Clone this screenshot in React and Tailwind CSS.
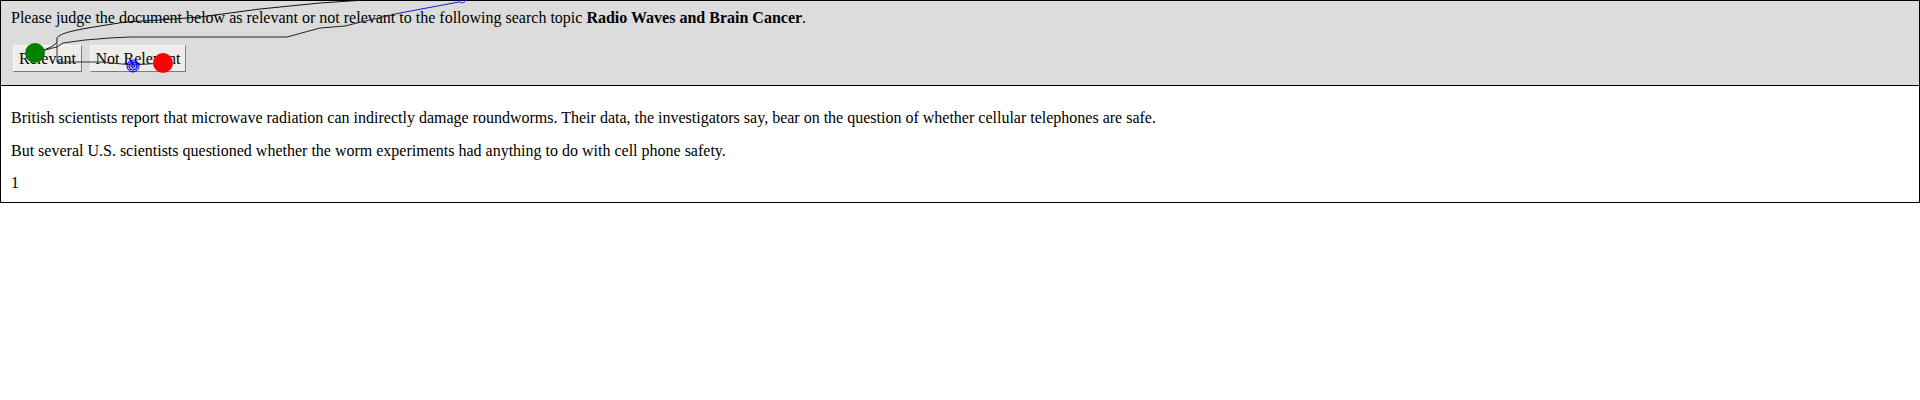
import React from "react";

const paragraphs = [
  "British scientists report that microwave radiation can indirectly damage roundworms. Their data, the investigators say, bear on the question of whether cellular telephones are safe.",
  "But several U.S. scientists questioned whether the worm experiments had anything to do with cell phone safety.",
  "1",
];

const MouseTrail = () => (
  <svg
    className="pointer-events-none absolute left-0 top-0"
    width="500"
    height="90"
    viewBox="0 0 500 90"
  >
    <path
      d="M35 53 C45 50 55 46 57 42 L57 38 C60 33 75 30 100 26 L125 22 L160 20 L200 17 L260 9 L320 3 L365 0"
      fill="none"
      stroke="#111"
      strokeWidth="1"
    />
    <path
      d="M35 53 C45 50 52 48 57 47 L63 43 L85 40 L110 38 L130 37 L287 37 L320 28 L345 26 L365 21 L400 13"
      fill="none"
      stroke="#222"
      strokeWidth="1"
    />
    <path d="M400 13 L459 2" fill="none" stroke="#1a1acc" strokeWidth="1" />
    <circle cx="462" cy="0" r="3" fill="none" stroke="#3333ff" strokeWidth="1" />
    <path
      d="M57 43 L57 62 L100 62 L133 65 L163 63"
      fill="none"
      stroke="#333"
      strokeWidth="1"
    />
    <circle cx="35" cy="53" r="10" fill="#008000" />
    <circle cx="163" cy="63" r="10" fill="#ff0000" />
    <circle cx="133" cy="66" r="6" fill="rgba(0,0,255,0.25)" stroke="#0000ff" strokeWidth="1" />
    <circle cx="133" cy="66" r="4" fill="none" stroke="#0000ff" strokeWidth="1" />
    <circle cx="133" cy="66" r="1.5" fill="none" stroke="#0000ff" strokeWidth="1" />
  </svg>
);

const JudgeButton = ({ label, width }) => (
  <button
    className={`h-[27px] ${width} border border-t-[#fafafa] border-l-[#fafafa] border-b-[#7a7a7a] border-r-[#7a7a7a] bg-[#efedea] text-center text-[16px] leading-[18px] text-black`}
  >
    {label}
  </button>
);

export default function App() {
  return (
    <div className="relative bg-white font-['Liberation_Serif','Times_New_Roman',serif] text-[16px] leading-[18px] text-black">
      <div className="border border-black">
        <div className="border-b border-black bg-[#dcdcdc] px-[10px] pb-[13px] pt-[8px]">
          <div>
            Please judge the document below as relevant or not relevant to the
            following search topic <b>Radio Waves and Brain Cancer</b>.
          </div>
          <div className="ml-[2px] mt-[18px] flex gap-[8px]">
            <JudgeButton label="Relevant" width="w-[69px]" />
            <JudgeButton label="Not Relevant" width="w-[96px]" />
          </div>
        </div>
        <div className="px-[10px] pb-[10px] pt-[23px]">
          <div>{paragraphs[0]}</div>
          <div className="mt-[15px]">{paragraphs[1]}</div>
          <div className="mt-[14px]">{paragraphs[2]}</div>
        </div>
      </div>
      <MouseTrail />
    </div>
  );
}
